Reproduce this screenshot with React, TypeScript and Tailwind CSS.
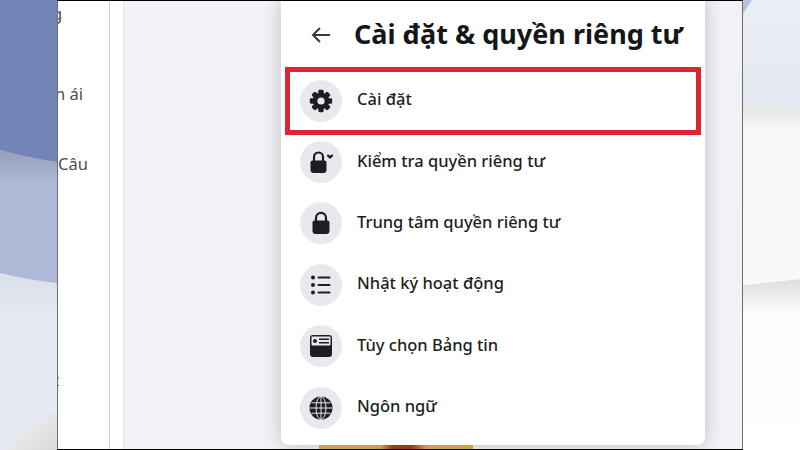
import type { ReactNode } from 'react'

const GearIcon = () => (
  <svg viewBox="0 0 24 24" className="h-6 w-6 fill-[#1c1e21]">
    <circle cx="12" cy="12" r="8.200" />
    {[0, 45, 90, 135, 180, 225, 270, 315].map((deg) => (
      <rect key={deg} x="9.300" y="0.800" width="5.400" height="6" rx="1.400" transform={`rotate(${deg} 12 12)`} />
    ))}
    <circle cx="12" cy="12" r="3.600" fill="#e8e9ee" />
  </svg>
)

const LockHeart = () => (
  <svg viewBox="0 0 24 24" className="h-6 w-6 fill-[#1c1e21]">
    <path d="M1.500 12.500c0-1.100.9-2 2-2h12c1.100 0 2 .9 2 2V20c0 1.700-1.300 3-3 3h-10c-1.700 0-3-1.300-3-3z" />
    <path d="M5 11V7a4.500 4.500 0 0 1 9 0v4" fill="none" stroke="#1c1e21" strokeWidth="2.200" />
    <path d="M21 9 18.300 6.400c-1-1.100.6-2.600 1.700-1.500l1 .8 1-.8c1.100-1.100 2.700.4 1.700 1.500z" />
  </svg>
)

const Lock = () => (
  <svg viewBox="0 0 24 24" className="h-6 w-6 fill-[#1c1e21]">
    <path d="M3.500 11.500c0-1.100.9-2 2-2h13c1.100 0 2 .9 2 2V20c0 1.700-1.300 3-3 3h-11c-1.700 0-3-1.300-3-3z" />
    <path d="M7 10V6.800a5 5 0 0 1 10 0V10" fill="none" stroke="#1c1e21" strokeWidth="2.200" />
  </svg>
)

const ListIcon = () => (
  <svg viewBox="0 0 24 24" className="h-6 w-6 fill-[#1c1e21]">
    <circle cx="4" cy="4.500" r="2" />
    <circle cx="4" cy="12" r="2" />
    <circle cx="4" cy="19.500" r="2" />
    <rect x="8.500" y="3.500" width="13" height="2" rx="1" />
    <rect x="8.500" y="11" width="13" height="2" rx="1" />
    <rect x="8.500" y="18.500" width="13" height="2" rx="1" />
  </svg>
)

const FeedIcon = () => (
  <svg viewBox="0 0 24 24" className="h-6 w-6">
    <rect x="1" y="1" width="22" height="22" rx="3" fill="#1c1e21" />
    <rect x="2.500" y="2.500" width="19" height="9" rx="1" fill="#e8e9ee" />
    <circle cx="6" cy="7" r="2" fill="#1c1e21" />
    <rect x="10" y="4.500" width="10" height="1.500" fill="#1c1e21" />
    <rect x="10" y="8" width="10" height="1.500" fill="#1c1e21" />
  </svg>
)

const GlobeIcon = () => (
  <svg viewBox="0 0 24 24" className="h-6 w-6">
    <circle cx="12" cy="12" r="11.500" fill="#1c1e21" />
    <g fill="none" stroke="#e8e9ee" strokeWidth="1">
      <ellipse cx="12" cy="12" rx="5" ry="11.500" />
      <path d="M12 .5v23M.5 12h23M2.500 6.800h19M2.500 17.200h19" />
    </g>
  </svg>
)

const items: { label: string; icon: ReactNode }[] = [
  { label: 'Cài đặt', icon: <GearIcon /> },
  { label: 'Kiểm tra quyền riêng tư', icon: <LockHeart /> },
  { label: 'Trung tâm quyền riêng tư', icon: <Lock /> },
  { label: 'Nhật ký hoạt động', icon: <ListIcon /> },
  { label: 'Tùy chọn Bảng tin', icon: <FeedIcon /> },
  { label: 'Ngôn ngữ', icon: <GlobeIcon /> },
]

function Row({ label, icon, marked }: { label: string; icon: ReactNode; marked: boolean }) {
  return (
    <div className="relative flex h-[61.4px] items-center pl-[19px]">
      <div className="flex h-[42px] w-[42px] shrink-0 items-center justify-center rounded-full bg-[#e8e9ee]">{icon}</div>
      <span className="relative -top-[1px] ml-[15px] text-[16.5px] font-medium text-[#1c1e21]">{label}</span>
      {marked && <div className="absolute -top-[3px] bottom-[-4px] left-[4px] right-[4px] border-[5px] border-[#dc2433]" />}
    </div>
  )
}

function WallLeft() {
  return (
    <svg viewBox="0 0 57 450" preserveAspectRatio="none" className="h-full w-full">
      <defs>
        <linearGradient id="mid" x1="0" y1="0" x2="0" y2="1">
          <stop offset="0" stopColor="#969fb8" />
          <stop offset="0.25" stopColor="#adb9d6" />
          <stop offset="1" stopColor="#adb9d6" />
        </linearGradient>
        <linearGradient id="low" x1="0" y1="0" x2="0" y2="1">
          <stop offset="0" stopColor="#dbdfe9" />
          <stop offset="0.3" stopColor="#e6eaf4" />
          <stop offset="1" stopColor="#e6eaf4" />
        </linearGradient>
        <linearGradient id="white" x1="0" y1="0" x2="1" y2="1">
          <stop offset="0" stopColor="#f7f7f7" />
          <stop offset="1" stopColor="#d8d8d8" />
        </linearGradient>
      </defs>
      <rect width="57" height="450" fill="#e6eaf4" />
      <path d="M0 273Q28 280 57 283V450H0Z" fill="url(#low)" />
      <path d="M0 150Q28 158 57 162V283Q28 280 0 273Z" fill="url(#mid)" />
      <path d="M0 0H57V162Q28 158 0 150Z" fill="#7085b5" />
      <path d="M5 450Q25 423 57 410V450Z" fill="url(#white)" />
    </svg>
  )
}

function WallRight() {
  return (
    <svg viewBox="0 0 57 450" preserveAspectRatio="none" className="h-full w-full">
      <defs>
        <linearGradient id="top" x1="0" y1="0" x2="0" y2="1">
          <stop offset="0" stopColor="#eceef5" />
          <stop offset="1" stopColor="#e4e8f2" />
        </linearGradient>
        <linearGradient id="sm" x1="0" y1="0" x2="0" y2="1">
          <stop offset="0" stopColor="#e4e4e4" />
          <stop offset="0.15" stopColor="#f7f7f7" />
          <stop offset="1" stopColor="#f9f9f9" />
        </linearGradient>
        <linearGradient id="bot" x1="0" y1="0" x2="0" y2="1">
          <stop offset="0" stopColor="#dedede" />
          <stop offset="0.2" stopColor="#fcfcfc" />
          <stop offset="1" stopColor="#ffffff" />
        </linearGradient>
      </defs>
      <rect width="57" height="450" fill="#ffffff" />
      <path d="M0 285 57 279V450H0Z" fill="url(#bot)" />
      <path d="M0 0H57V108L0 104Z" fill="url(#top)" />
      <path d="M0 104 57 108V279L0 285Z" fill="url(#sm)" />
      <path d="M0 0H9L0 14Z" fill="#b6c3e0" />
    </svg>
  )
}

export default function App() {
  return (
    <div className="flex h-[450px] w-[800px] overflow-hidden bg-white font-['Noto_Sans','Open_Sans',sans-serif]">
      <div className="h-full w-[57px] shrink-0"><WallLeft /></div>
      <div className="flex h-full w-[686px] shrink-0 border-x border-x-[#6e6e6e] border-y border-y-black">
        <div className="h-full w-[52px] shrink-0 overflow-hidden border-r border-[#cfd0d2] text-[16.5px] text-[#4b4c4f]">
          <div className="-ml-[6px] mt-[1px] h-[24px]">g</div>
          <div className="mt-[56px] h-[24px] -ml-[3px] whitespace-nowrap">n ái</div>
          <div className="mt-[46px] h-[24px] whitespace-nowrap">Câu</div>
          <div className="mt-[192px] -ml-[5px] text-black">t</div>
        </div>
        <div className="h-full w-[14px] shrink-0 border-r border-[#e4e6eb]" />
        <div className="flex min-w-0 flex-1 flex-col bg-[#f0f2f5] pl-[157px]">
          <div className="h-[444px] w-[424px] shrink-0 rounded-b-lg bg-white shadow-[0_0_18px_rgba(0,0,0,0.22)]">
            <div className="flex h-[67px] items-center">
              <svg viewBox="0 0 24 24" className="ml-[28px] h-6 w-6 fill-none stroke-[#3a3b3e] stroke-2">
                <path d="M21 12H4M11 5l-7 7 7 7" />
              </svg>
              <h1 className="ml-[21px] whitespace-nowrap text-[27px] font-bold text-[#14161a]">Cài đặt &amp; quyền riêng tư</h1>
            </div>
            <div className="pt-[2px]">
              {items.map((item, i) => (
                <Row key={item.label} label={item.label} icon={item.icon} marked={i === 0} />
              ))}
            </div>
          </div>
          <div className="ml-[38px] h-[4px] w-[154px] bg-[linear-gradient(90deg,#c9a63f,#c9a63f_40%,#a8301f_48%,#a8301f_60%,#c9a63f_70%)]" />
        </div>
      </div>
      <div className="h-full w-[57px] shrink-0"><WallRight /></div>
    </div>
  )
}
